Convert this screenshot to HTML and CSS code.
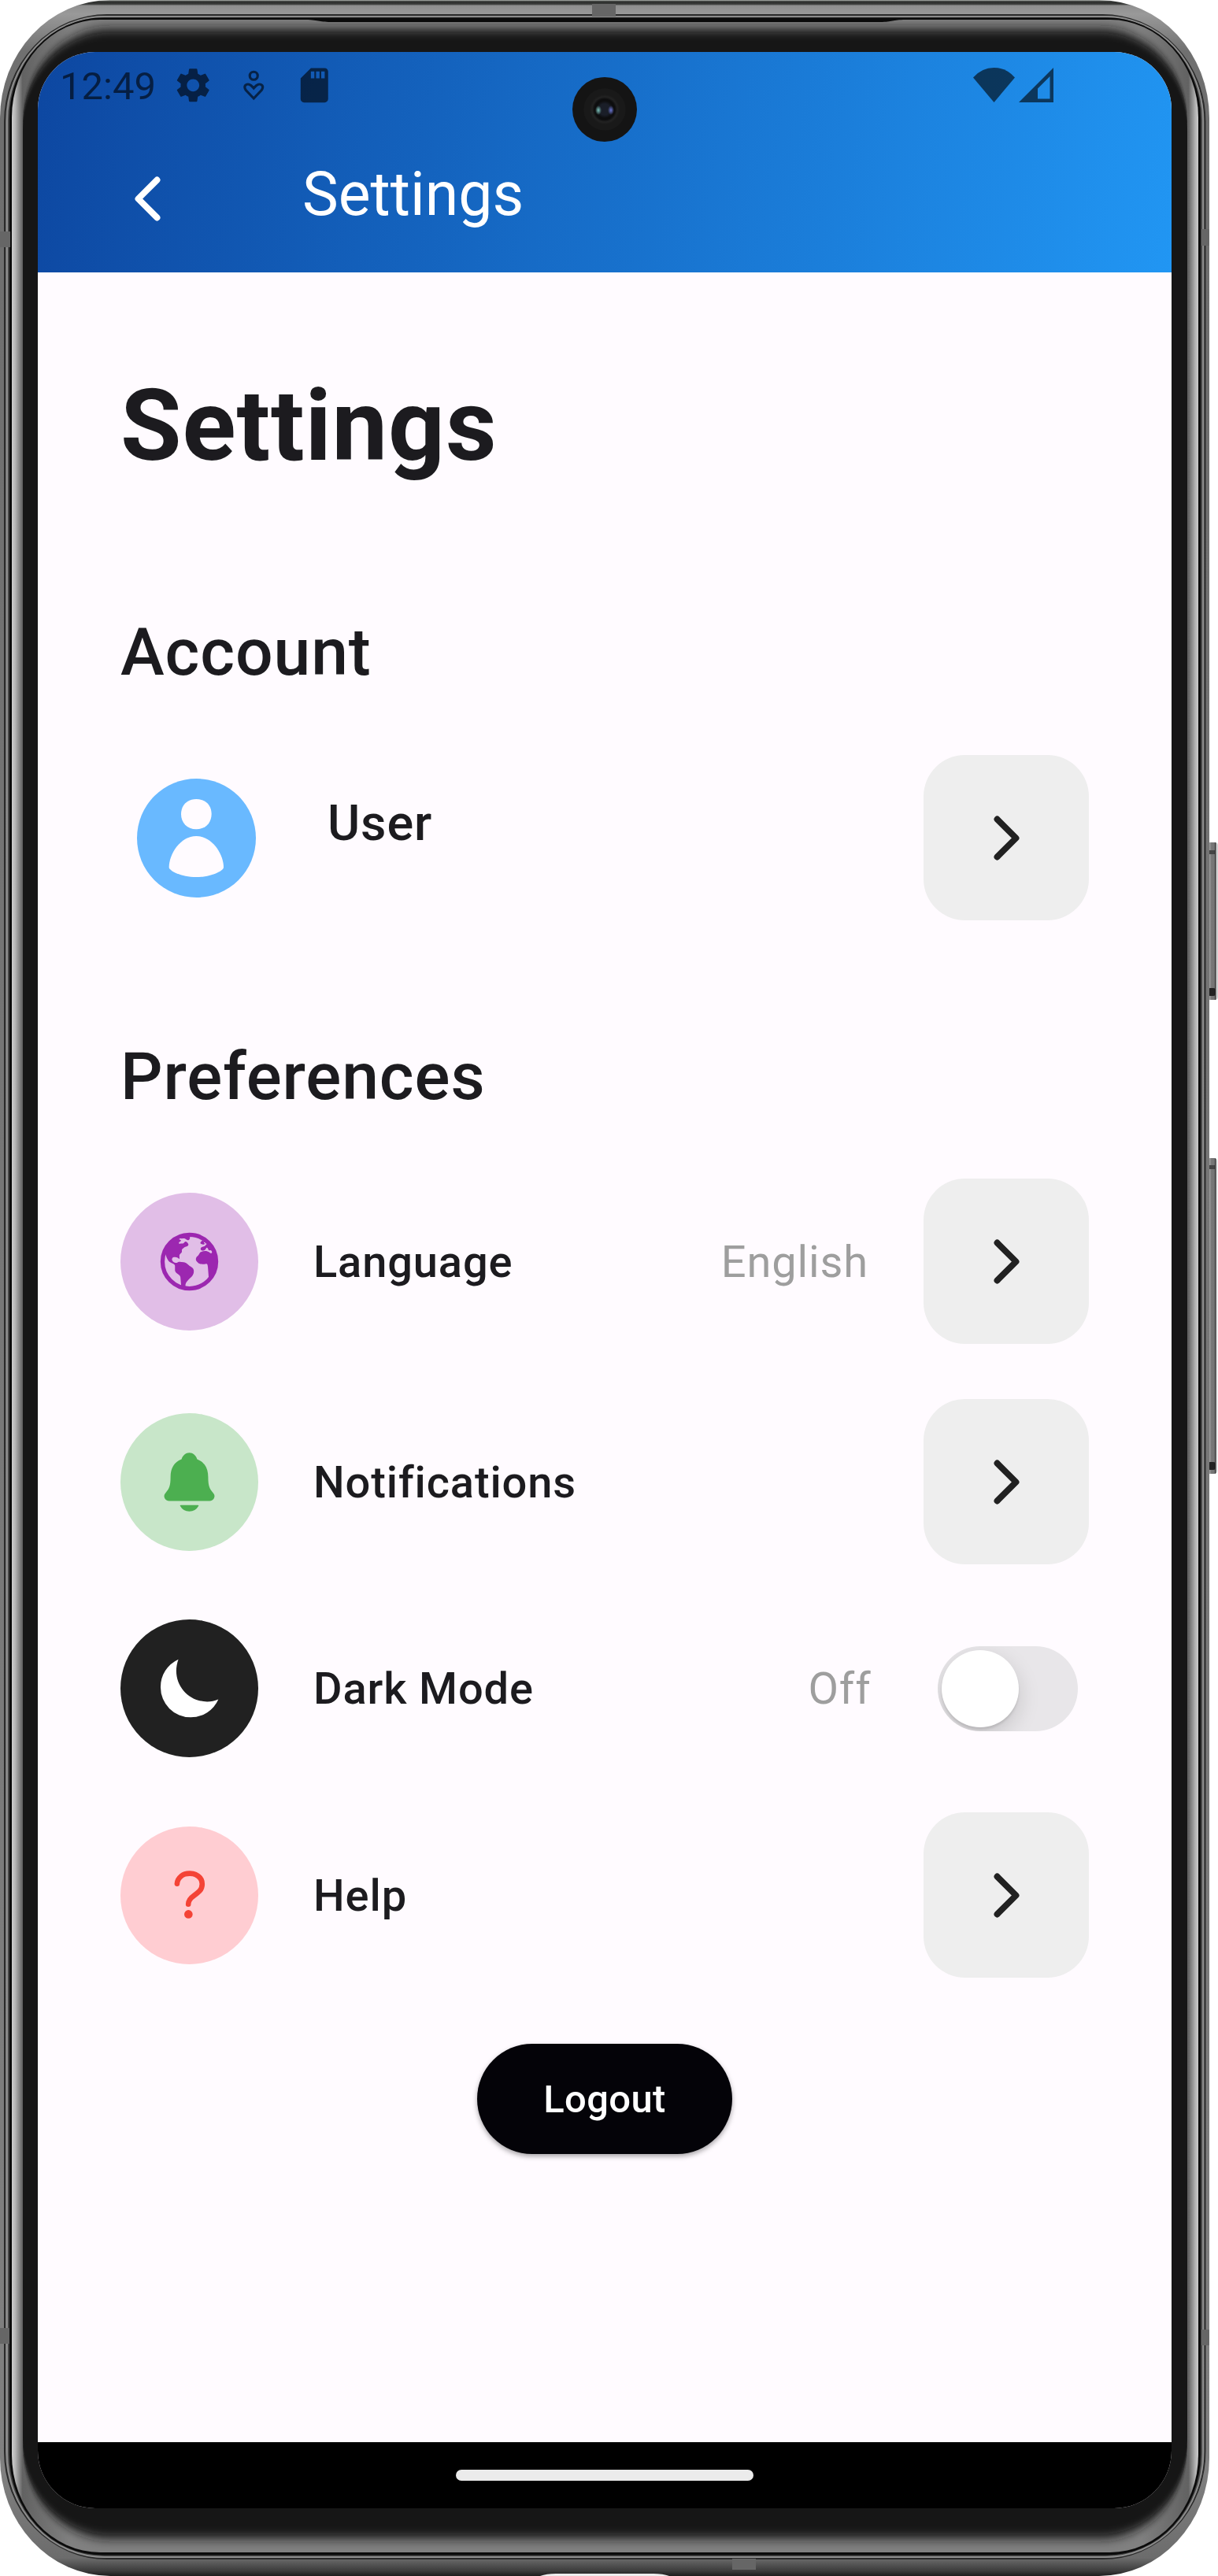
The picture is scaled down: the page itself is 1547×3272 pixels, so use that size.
FILE: index.html
```html
<!DOCTYPE html>
<html lang="en">
<head>
<meta charset="utf-8">
<title>Settings</title>
<link rel="stylesheet" href="styles.css">
</head>
<body>
<div class="phone">
  <svg class="frame" viewBox="0 0 1547 3272" width="1547" height="3272" aria-hidden="true">
    <defs>
      <linearGradient id="metal" x1="0" y1="0" x2="0" y2="3272" gradientUnits="userSpaceOnUse">
        <stop offset="0" stop-color="#b9bdb9"/>
        <stop offset=".0006" stop-color="#2b2d2b"/>
        <stop offset=".0016" stop-color="#3a3b3a"/>
        <stop offset=".0022" stop-color="#8f8f8f"/>
        <stop offset=".0054" stop-color="#999"/>
        <stop offset=".02" stop-color="#707070"/>
        <stop offset=".05" stop-color="#6e6e6e"/>
        <stop offset=".96" stop-color="#808080"/>
        <stop offset=".993" stop-color="#6c6c6c"/>
        <stop offset=".998" stop-color="#3c3c3c"/>
        <stop offset="1" stop-color="#1c1c1c"/>
      </linearGradient>
      <linearGradient id="rim" x1="15" y1="0" x2="1523" y2="0" gradientUnits="userSpaceOnUse">
        <stop offset="0" stop-color="#d0d0d0"/>
        <stop offset=".003" stop-color="#b4b4b4"/>
        <stop offset=".009" stop-color="#626262"/>
        <stop offset=".05" stop-color="#808080"/>
        <stop offset=".95" stop-color="#808080"/>
        <stop offset=".991" stop-color="#626262"/>
        <stop offset=".997" stop-color="#b4b4b4"/>
        <stop offset="1" stop-color="#d0d0d0"/>
      </linearGradient>
      <linearGradient id="key" x1="1533" y1="0" x2="1547" y2="0" gradientUnits="userSpaceOnUse">
        <stop offset="0" stop-color="#555"/>
        <stop offset=".25" stop-color="#999"/>
        <stop offset=".4" stop-color="#777"/>
        <stop offset=".68" stop-color="#747474"/>
        <stop offset=".75" stop-color="#333"/>
        <stop offset=".85" stop-color="#bbb"/>
        <stop offset="1" stop-color="#ddd"/>
      </linearGradient>
      <filter id="soft" x="-2%" y="-2%" width="104%" height="104%"><feGaussianBlur stdDeviation="0.5 7"/></filter>
      <clipPath id="glass"><rect x="15" y="25" width="1507" height="3217" rx="112" ry="124"/></clipPath>
    </defs>
    <rect x="1533" y="1070" width="14" height="200" rx="4" fill="url(#key)"/>
    <rect x="1536" y="1080" width="7" height="5" fill="#444"/>
    <rect x="1534" y="1255" width="10" height="10" rx="3" fill="#222"/>
    <rect x="1533" y="1471" width="13" height="401" rx="4" fill="url(#key)"/>
    <rect x="1536" y="1480" width="7" height="5" fill="#444"/>
    <rect x="1534" y="1857" width="10" height="10" rx="3" fill="#222"/>
    <rect x="0" y="0" width="1536" height="3272" rx="140" ry="150" fill="url(#metal)"/>
    <rect x="6" y="19" width="1524.500" height="3231" rx="130" ry="136" fill="none" stroke="#2a2a2a" stroke-width="2"/>
    <rect x="9" y="21" width="1519" height="3227" rx="124" ry="132" fill="#454545" stroke="#8c8c8c" stroke-width="2"/>
    <rect x="12" y="22.500" width="1513" height="3223" rx="118" ry="128" fill="#0b0b0b"/>
    <rect x="15" y="25" width="1507" height="3217" rx="112" ry="124" fill="url(#rim)"/>
    <g clip-path="url(#glass)">
      <path d="M385 25C405 25 404 28 420 28H1118C1134 28 1133 25 1150 25Z" fill="#0b0b0b"/>
      <rect x="29" y="37" width="1479" height="3187" rx="112" ry="120" fill="#141414" filter="url(#soft)"/>
    </g>
    <g fill="#666">
      <path d="M752 5h30v16h-30z"/><path d="M930 3250h30v14h-30z"/>
      <path d="M0 294h13v20H0zM0 2957h12v20H0zM1526 291h10v21h-10zM1526 2959h10v20h-10z"/>
    </g>
    <path d="M686 3272q8-3 20-3h124q12 0 20 3z" fill="#eee"/>
  </svg>

  <main class="screen">
    <header class="header">
      <div class="status">
        <span class="clock">12:49</span>
        <svg class="status-icon" viewBox="0 0 24 24"><path d="M19.14 12.94c.04-.3.06-.61.06-.94 0-.32-.02-.64-.07-.94l2.03-1.58c.18-.14.23-.41.12-.61l-1.92-3.32c-.12-.22-.37-.29-.59-.22l-2.390.96c-.5-.38-1.030-.7-1.620-.94l-.36-2.540c-.04-.24-.24-.41-.48-.41h-3.840c-.24 0-.43.17-.47.41l-.36 2.540c-.59.24-1.130.57-1.620.94l-2.390-.96c-.22-.08-.47 0-.59.22L2.740 8.870c-.12.21-.08.47.12.61l2.030 1.580c-.05.3-.09.63-.09.94s.02.64.07.94l-2.030 1.580c-.18.14-.23.41-.12.61l1.920 3.320c.12.22.37.29.59.22l2.390-.96c.5.38 1.030.7 1.620.94l.36 2.540c.05.24.24.41.48.41h3.840c.24 0 .44-.17.47-.41l.36-2.540c.59-.24 1.130-.56 1.620-.94l2.390.96c.22.08.47 0 .59-.22l1.920-3.320c.12-.22.07-.47-.12-.61l-2.010-1.580zM12 15.600c-1.980 0-3.600-1.620-3.600-3.600s1.620-3.600 3.600-3.600 3.600 1.620 3.600 3.600-1.620 3.600-3.600 3.600z"/></svg>
        <svg class="status-icon" viewBox="0 0 52.500 52.500"><g fill="none" stroke="currentColor" stroke-width="3.200"><circle cx="26.250" cy="14.250" r="5"/><path d="M26.250 43L16.300 32.500C12.500 27 17 24.200 20.500 25.300C23 26 24.500 28 26.250 30C28 28 29.500 26 32 25.300C35.500 24.200 40 27 36.200 32.500Z"/></g></svg>
        <svg class="status-icon" viewBox="0 0 24 24"><path d="M18 2h-8L4.020 8 4 20c0 1.100.9 2 2 2h12c1.100 0 2-.9 2-2V4c0-1.100-.9-2-2-2zm-6 6h-2V4h2v4zm3 0h-2V4h2v4zm3 0h-2V4h2v4z"/></svg>
        <svg class="wifi" viewBox="0 0 53 44"><path d="M0 12.500Q11 0 26.500 0T53 12.500L26.500 44z"/></svg>
        <svg class="signal" viewBox="0 0 44 44"><path fill-rule="evenodd" d="M44 0V44H0zM39.500 11L24 26.500V39.500H39.500z"/></svg>
      </div>
      <div class="appbar">
        <svg class="chevron" viewBox="0 0 512 512"><path d="M328 112L184 256l144 144"/></svg>
        <span class="appbar-title">Settings</span>
      </div>
    </header>

    <section class="content">
      <h1>Settings</h1>
      <h2 class="account">Account</h2>
      <div class="row user-row">
        <svg class="avatar" viewBox="0 0 453 453"><circle cx="226.500" cy="226.500" r="226.500" fill="#69b9ff"/><g fill="#fffbff"><path d="M226 78c37 0 58 25 58 57s-22 58-58 58-58-26-58-58 22-57 58-57z"/><path d="M226 219C287 219 330 288 330 338C330 350 285 375 226 375S122 350 122 338C122 288 165 219 226 219Z"/></g></svg>
        <span class="user-name">User</span>
        <button class="go"><svg class="chevron" viewBox="0 0 512 512"><path d="M184 112l144 144-144 144"/></svg></button>
      </div>
      <h2 class="preferences">Preferences</h2>
      <div class="list">
        <div class="row">
          <span class="badge purple"><svg viewBox="0 0 256 256"><circle cx="128" cy="128" r="102.500" fill="none" stroke="currentColor" stroke-width="16"/><path d="M37 100C42 117 48 129 60 133C67 136 73 138 73 144V162C75 170 79 172 85 176C91 180 94 183 94 189L97 224H113C112 212 116 206 124 198C136 187 145 180 145 166C146 154 139 150 130 145C123 140 117 131 106 130C98 129 90 127 84 130C79 135 69 132 65 127C59 121 61 113 69 111C76 109 84 112 86 115C91 119 91 117 90 112V104C91 98 97 96 99 92C101 87 97 84 101 80C105 75 113 70 120 69C126 67 125 61 123 59C119 51 113 48 109 54C104 61 97 57 90 60C86 57 88 53 93 51C99 48 95 44 89 43C84 39 91 38 99 40C107 38 111 39 116 43C122 49 128 45 130 39V28C88 24 38 48 28 95Z"/><path d="M202 189L199 150C198 138 196 135 190 137C176 139 166 138 160 131C150 122 152 115 158 108C166 102 166 92 174 90C184 86 197 86 204 92C208 97 214 98 215 92C216 86 211 83 206 85C200 87 201 78 197 75C192 73 192 80 188 83C184 87 172 88 171 80C171 73 176 72 183 70C187 69 190 67 193 61L205 62C238 95 242 151 211 187Z"/><path d="M173 52C175 47 181 48 184 51C189 47 192 52 188 58C185 65 175 63 171 59C169 55 171 53 173 52Z"/><circle cx="186" cy="56" r="2.500" fill="#e1bee7"/></svg></span>
          <span class="label">Language</span>
          <span class="value">English</span>
          <button class="go"><svg class="chevron" viewBox="0 0 512 512"><path d="M184 112l144 144-144 144"/></svg></button>
        </div>
        <div class="row">
          <span class="badge green"><svg viewBox="0 0 512 512"><path d="M440.080 341.310c-1.660-2-3.290-4-4.890-5.930-22-26.610-35.310-42.670-35.310-118 0-39-9.330-71-27.720-95-13.560-17.730-31.890-31.180-56.050-41.120a3 3 0 01-.82-.67C306.600 51.490 282.820 32 256 32s-50.590 19.490-59.280 48.560a3.130 3.130 0 01-.81.65c-56.380 23.210-83.780 67.740-83.780 136.140 0 75.360-13.290 91.420-35.310 118-1.600 1.930-3.230 3.890-4.890 5.930a35.160 35.160 0 00-4.650 37.620c6.170 13 19.320 21.070 34.330 21.070H410.500c14.940 0 28-8.060 34.190-21a35.170 35.170 0 00-4.610-37.660zM256 480a80.060 80.060 0 0070.440-42.130 4 4 0 00-3.540-5.870H189.120a4 4 0 00-3.550 5.870A80.060 80.060 0 00256 480z"/></svg></span>
          <span class="label">Notifications</span>
          <button class="go"><svg class="chevron" viewBox="0 0 512 512"><path d="M184 112l144 144-144 144"/></svg></button>
        </div>
        <div class="row">
          <span class="badge dark"><svg viewBox="0 0 512 512"><path d="M172 34c-10 28-16 58-16 88 0 130 106 236 236 236 30 0 58-6 86-18A231 231 0 01266 478 230 230 0 0136 248 232 232 0 01172 34z"/></svg></span>
          <span class="label">Dark Mode</span>
          <span class="value">Off</span>
          <span class="switch"><span class="knob"></span></span>
        </div>
        <div class="row">
          <span class="badge red"><svg viewBox="0 0 512 512"><path d="M162 166s1.440-33 33.540-59.460C214.600 90.830 237.490 88.280 258 88c18.730-.23 35.470 2.940 45.480 7.820C320.590 104.200 354 124.600 354 168c0 45.670-29.180 66.370-62.350 89.180S248 300.360 248 324" fill="none" stroke="currentColor" stroke-width="40" stroke-linecap="round"/><circle cx="249" cy="400" r="32"/></svg></span>
          <span class="label">Help</span>
          <button class="go"><svg class="chevron" viewBox="0 0 512 512"><path d="M184 112l144 144-144 144"/></svg></button>
        </div>
      </div>
      <button class="logout">Logout</button>
    </section>

    <footer class="navbar"><span class="handle"></span></footer>
    <span class="camera"></span>
  </main>
</div>
</body>
</html>
```

FILE: styles.css
```css
* {
  box-sizing: border-box;
}

body {
  margin: 0;
  background: #fff;
  color: #1c1b1f;
  font-family: Roboto, sans-serif;
}

button {
  margin: 0;
  padding: 0;
  border: 0;
  font-family: inherit;
}

svg {
  display: block;
  flex: none;
  fill: currentColor;
}

.phone {
  position: relative;
  width: 1547px;
  height: 3272px;
  padding: 66px 59px 86px 48px;
  overflow: hidden;
}

.frame {
  position: absolute;
  top: 0;
  left: 0;
}

.screen {
  position: relative;
  display: flex;
  flex-direction: column;
  width: 1440px;
  height: 3120px;
  border-radius: 73px;
  overflow: hidden;
  background: #fffbff;
}

.header {
  height: 280px;
  background: linear-gradient(101deg, #0d47a1, #2196f3);
}

.status {
  display: flex;
  align-items: center;
  height: 84px;
  padding: 0 150px 0 28px;
  color: rgba(0, 0, 0, 0.6);
}

.clock {
  width: 143px;
  padding-top: 3px;
  font-size: 49px;
}

.status-icon {
  width: 52.5px;
  height: 52.5px;
  margin-right: 24.5px;
}

.wifi {
  width: 53px;
  height: 44px;
  margin-left: auto;
}

.signal {
  width: 44px;
  height: 44px;
  margin-left: 5px;
}

.chevron {
  width: 85px;
  height: 85px;
  fill: none;
  stroke: currentColor;
  stroke-width: 48;
  stroke-linecap: round;
  stroke-linejoin: round;
}

.appbar {
  display: flex;
  align-items: center;
  height: 196px;
  padding: 8px 0 0 97px;
  color: #fff;
}

.appbar-title {
  margin: -11px 0 0 154px;
  font-size: 77px;
}

.content {
  display: flex;
  flex: 1;
  flex-direction: column;
  padding: 121px 105px 0;
}

h1,
h2 {
  margin: 0;
}

h1 {
  font-size: 126px;
  font-weight: 700;
  line-height: 148px;
  letter-spacing: 0.875px;
}

h2 {
  font-size: 84px;
  font-weight: 500;
  line-height: 98px;
  letter-spacing: 0.875px;
}

.account {
  margin: 165px 0 81px;
}

.preferences {
  margin: 150px 0 80px;
}

.row {
  display: flex;
  align-items: center;
}

.avatar {
  width: 151px;
  height: 151px;
  margin-left: 21px;
}

.user-name {
  flex: 1;
  margin: -37px 0 0 91px;
  font-size: 63px;
  font-weight: 500;
  letter-spacing: 0.875px;
}

.go {
  display: flex;
  align-items: center;
  justify-content: center;
  width: 210px;
  height: 210px;
  border-radius: 52.5px;
  background: #eee;
  color: #212121;
}

.list {
  display: flex;
  flex-direction: column;
  gap: 70px;
}

.badge {
  display: flex;
  align-items: center;
  justify-content: center;
  width: 175px;
  height: 175px;
  margin-right: 70px;
  border-radius: 50%;
}

.badge svg {
  width: 85px;
  height: 85px;
}

.purple {
  background: #e1bee7;
  color: #9c27b0;
}

.green {
  background: #c8e6c9;
  color: #4caf50;
}

.dark {
  background: #212121;
  color: #fff;
}

.red {
  background: #ffcdd2;
  color: #f44336;
}

.label,
.value {
  padding-top: 1px;
  font-size: 56px;
  letter-spacing: 0.875px;
}

.label {
  flex: 1;
  font-weight: 500;
}

.value {
  margin-right: 70px;
  color: #9e9e9e;
}

.switch {
  width: 178.5px;
  height: 108.5px;
  margin: 1px 14px 0;
  padding: 5.25px;
  border-radius: 55px;
  overflow: hidden;
  background: #e8e6e9;
}

.knob {
  display: block;
  width: 98px;
  height: 98px;
  border-radius: 50%;
  background: #fff;
  box-shadow: 0 10px 28px rgba(0, 0, 0, 0.15), 0 3px 3px rgba(0, 0, 0, 0.1);
}

.logout {
  align-self: center;
  width: 324px;
  height: 140px;
  margin-top: 84px;
  padding-top: 1px;
  border-radius: 70px;
  background: #040308;
  color: #fff;
  font-size: 49px;
  font-weight: 500;
  letter-spacing: 0.35px;
  box-shadow: 0 3px 6px rgba(0, 0, 0, 0.35);
}

.navbar {
  display: flex;
  align-items: center;
  justify-content: center;
  height: 84px;
  background: #000;
}

.handle {
  width: 378px;
  height: 14px;
  border-radius: 7px;
  background: #ebebeb;
}

.camera {
  position: absolute;
  top: 32px;
  left: 679px;
  width: 82px;
  height: 82px;
  border-radius: 50%;
  background:
    radial-gradient(ellipse 4px 6px at 33px 42px, #7cc4bb, transparent),
    radial-gradient(ellipse 4px 6px at 49px 42px, #6a74d0, transparent),
    radial-gradient(circle at 41px 41px, #1a1e28 0 7px, #0d0d0e 11px 13px, #222 16px, #191919 19px 26px, #141414 27px);
}
```
